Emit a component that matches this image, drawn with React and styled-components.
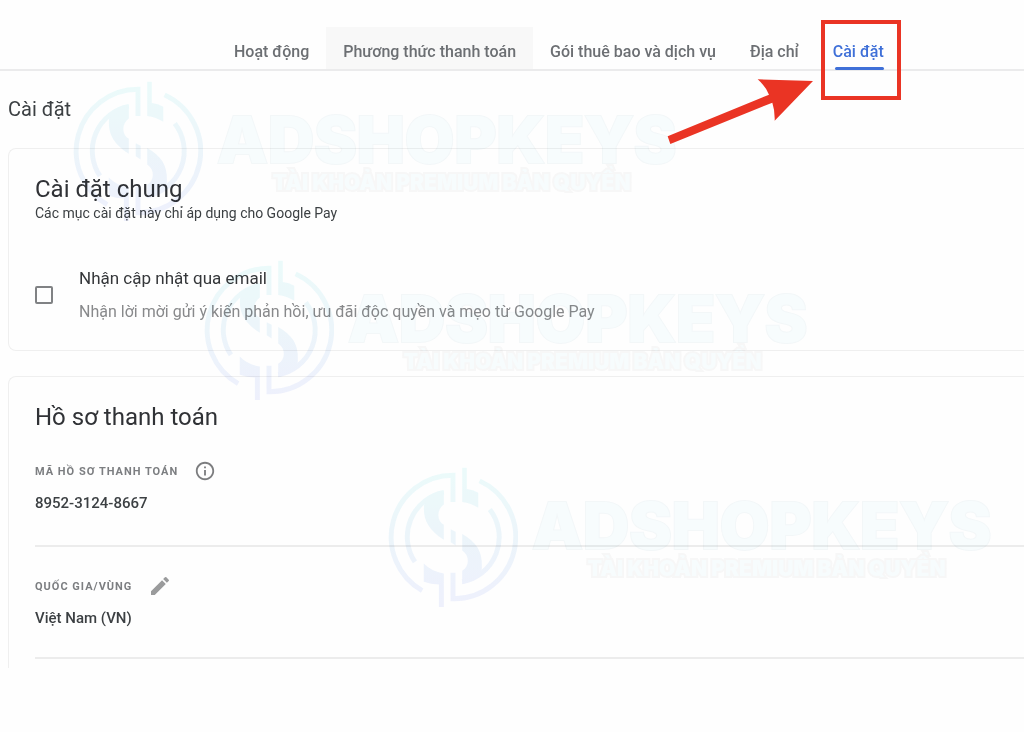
import React, { useState } from 'react';
import styled, { createGlobalStyle } from 'styled-components';
import { MdEdit, MdInfoOutline } from 'react-icons/md';

const GlobalStyle = createGlobalStyle`
  *, *::before, *::after {
    box-sizing: border-box;
  }

  body {
    margin: 0;
    background: #fefefe;
    color: #3c4043;
    font-family: Roboto, 'Liberation Sans', sans-serif;
    overflow-x: hidden;
  }
`;

const Page = styled.div`
  position: relative;
  overflow: hidden;
`;

const Header = styled.header`
  position: relative;
  padding: 27px 0 0 217px;
  border-bottom: 2px solid #ebebec;
`;

const Tabs = styled.nav`
  display: flex;
`;

const Tab = styled.a`
  position: relative;
  flex-shrink: 0;
  height: 42px;
  padding: 0 17px;
  font-size: 16px;
  font-weight: 500;
  line-height: 50px;
  white-space: nowrap;
  text-decoration: none;
  color: ${({ $active }) => ($active ? '#3f70d8' : '#6c6f73')};
  background: ${({ $hovered }) => ($hovered ? '#f8f8f8' : 'transparent')};

  &::after {
    content: '';
    display: ${({ $active }) => ($active ? 'block' : 'none')};
    position: absolute;
    left: 19px;
    right: 17px;
    bottom: -1px;
    height: 3px;
    border-radius: 2px;
    background: #3f70d8;
  }
`;

const Highlight = styled.span`
  position: absolute;
  top: -7px;
  left: 5px;
  width: 80px;
  height: 80px;
  border: 4px solid #ea3424;
  pointer-events: none;
`;

const Arrow = styled.svg`
  position: absolute;
  top: 78px;
  left: 665px;
  width: 150px;
  height: 68px;
  pointer-events: none;
`;

const Main = styled.main`
  padding: 24px 0 0 8px;
`;

const PageTitle = styled.h1`
  margin: 0 0 25px;
  font-size: 20px;
  font-weight: 400;
  line-height: 28px;
`;

const Card = styled.section`
  padding: 24px 0 0 26px;
  border: 1px solid #efefef;
  border-right: 0;
  border-bottom-width: ${({ $open }) => ($open ? '0' : '1px')};
  border-radius: ${({ $open }) => ($open ? '8px 0 0 0' : '8px 0 0 8px')};

  & + & {
    margin-top: 25px;
  }
`;

const CardTitle = styled.h2`
  margin: 0;
  font-size: 24px;
  font-weight: 400;
  line-height: 32px;
  color: #303236;
`;

const CardNote = styled.p`
  margin: 0;
  font-size: 14px;
  line-height: 16px;
`;

const Option = styled.div`
  display: flex;
  align-items: center;
  gap: 26px;
  padding: 41px 0 22px;
`;

const Checkbox = styled.input`
  appearance: none;
  flex-shrink: 0;
  width: 18px;
  height: 18px;
  margin: 0;
  border: 2px solid #808284;
  border-radius: 2px;

  &:checked {
    background: #3f70d8;
  }
`;

const OptionLabel = styled.label`
  display: block;
  font-size: 17px;
  line-height: 33px;
  color: #35373a;
`;

const OptionHint = styled.p`
  margin: 0;
  font-size: 16px;
  line-height: 33px;
  color: #88898b;
`;

const Fields = styled.dl`
  margin: 0;
  padding: 26px 0 9px;
`;

const Field = styled.div`
  padding-bottom: 30px;
  border-bottom: 2px solid #ececec;

  & + & {
    padding: 27px 0;
  }
`;

const FieldName = styled.dt`
  display: flex;
  align-items: center;
  gap: 16px;
  height: 24px;
  font-size: 11px;
  font-weight: 700;
  letter-spacing: 1px;
  color: #7c7e81;
`;

const FieldValue = styled.dd`
  margin: 8px 0 0;
  font-size: 15px;
  font-weight: 500;
  line-height: 24px;
`;

const IconButton = styled.button`
  display: flex;
  padding: 0;
  border: 0;
  background: none;
  color: ${({ $muted }) => ($muted ? '#9a9b9c' : '#7c7d7f')};
  font-size: ${({ $muted }) => ($muted ? '24px' : '22px')};
  cursor: pointer;
`;

const Mark = styled.div`
  position: absolute;
  top: ${({ $top }) => $top}px;
  left: ${({ $left }) => $left}px;
  display: flex;
  gap: 14px;
  opacity: 0.7;
  mix-blend-mode: multiply;
  pointer-events: none;
`;

const MarkLogo = styled.svg`
  flex-shrink: 0;
  width: 130px;
  height: 142px;
`;

const MarkWords = styled.div`
  padding-top: 26px;
  font-family: Inter, sans-serif;
  font-weight: 900;
  text-align: center;
  white-space: nowrap;
  color: #f5fcfe;
  paint-order: stroke fill;
`;

const MarkName = styled.div`
  font-size: 64px;
  line-height: 66px;
  -webkit-text-stroke: 2px #eff5f7;
`;

const MarkTagline = styled.div`
  padding-left: 10px;
  font-size: 21px;
  line-height: 20px;
  -webkit-text-stroke: 4px #f5f5f5;
`;

const tabs = [
  { label: 'Hoạt động' },
  { label: 'Phương thức thanh toán', hovered: true },
  { label: 'Gói thuê bao và dịch vụ' },
  { label: 'Địa chỉ' },
  { label: 'Cài đặt', active: true },
];

const marks = [
  { top: 81, left: 73 },
  { top: 260, left: 204 },
  { top: 467, left: 388 },
];

const Watermark = ({ top, left }) => {
  const id = `mark-${top}`;
  return (
    <Mark $top={top} $left={left} aria-hidden="true">
      <MarkLogo viewBox="52 36 396 432">
        <defs>
          <linearGradient
            id={id}
            gradientUnits="userSpaceOnUse"
            x1="250"
            y1="40"
            x2="250"
            y2="460"
          >
            <stop offset="0" stopColor="#e4fafa" />
            <stop offset="0.5" stopColor="#e6f2fa" />
            <stop offset="1" stopColor="#e8ebfd" />
          </linearGradient>
        </defs>
        <g fill="none" stroke={`url(#${id})`} strokeWidth="15">
          <path d="M250 142V61A188 188 0 0 0 156 412" />
          <path d="M331 78A188 188 0 0 1 250 437V358" />
          <path d="M222 113A138 138 0 0 0 134 325" />
          <path d="M362 165A138 138 0 0 1 278 385" />
        </g>
        <g fill={`url(#${id})`}>
          <path d="M222 107Q180 115 162 150C158 190 170 225 222 257V212C200 200 200 165 222 150Z" />
          <path d="M278 240C320 265 340 290 338 340Q338 355 330 362Q310 385 278 393V352C300 340 302 305 278 290Z" />
          <path d="M243 225L258 233V275L243 265Z" />
          <path d="M278 38H292V103Q312 105 327 114V160Q305 145 278 142Z" />
          <path d="M161 330Q185 355 222 360V462H207V394Q182 392 161 385Z" />
        </g>
      </MarkLogo>
      <MarkWords>
        <MarkName>ADSHOPKEYS</MarkName>
        <MarkTagline>TÀI KHOẢN PREMIUM BẢN QUYỀN</MarkTagline>
      </MarkWords>
    </Mark>
  );
};

const App = () => {
  const [emailUpdates, setEmailUpdates] = useState(false);
  return (
    <Page>
      <GlobalStyle />
      <Header>
        <Tabs>
          {tabs.map(({ label, hovered, active }) => (
            <Tab key={label} href="#" $hovered={hovered} $active={active}>
              {label}
              {active && <Highlight />}
            </Tab>
          ))}
        </Tabs>
      </Header>
      <Main>
        <PageTitle>Cài đặt</PageTitle>
        <Card>
          <CardTitle>Cài đặt chung</CardTitle>
          <CardNote>Các mục cài đặt này chỉ áp dụng cho Google Pay</CardNote>
          <Option>
            <Checkbox
              id="email-updates"
              type="checkbox"
              checked={emailUpdates}
              onChange={() => setEmailUpdates(!emailUpdates)}
            />
            <div>
              <OptionLabel htmlFor="email-updates">
                Nhận cập nhật qua email
              </OptionLabel>
              <OptionHint>
                Nhận lời mời gửi ý kiến phản hồi, ưu đãi độc quyền và mẹo từ
                Google Pay
              </OptionHint>
            </div>
          </Option>
        </Card>
        <Card $open>
          <CardTitle>Hồ sơ thanh toán</CardTitle>
          <Fields>
            <Field>
              <FieldName>
                MÃ HỒ SƠ THANH TOÁN
                <IconButton type="button" aria-label="Thông tin">
                  <MdInfoOutline />
                </IconButton>
              </FieldName>
              <FieldValue>8952-3124-8667</FieldValue>
            </Field>
            <Field>
              <FieldName>
                QUỐC GIA/VÙNG
                <IconButton type="button" aria-label="Chỉnh sửa" $muted>
                  <MdEdit />
                </IconButton>
              </FieldName>
              <FieldValue>Việt Nam (VN)</FieldValue>
            </Field>
          </Fields>
        </Card>
      </Main>
      {marks.map(({ top, left }) => (
        <Watermark key={top} top={top} left={left} />
      ))}
      <Arrow viewBox="375 204 450 204" aria-hidden="true">
        <path
          fill="#ea3424"
          d="M383 379L687 254Q676 228 653 208L819 213L704 332Q705 302 697 278L391 402Z"
        />
      </Arrow>
    </Page>
  );
};

export default App;
